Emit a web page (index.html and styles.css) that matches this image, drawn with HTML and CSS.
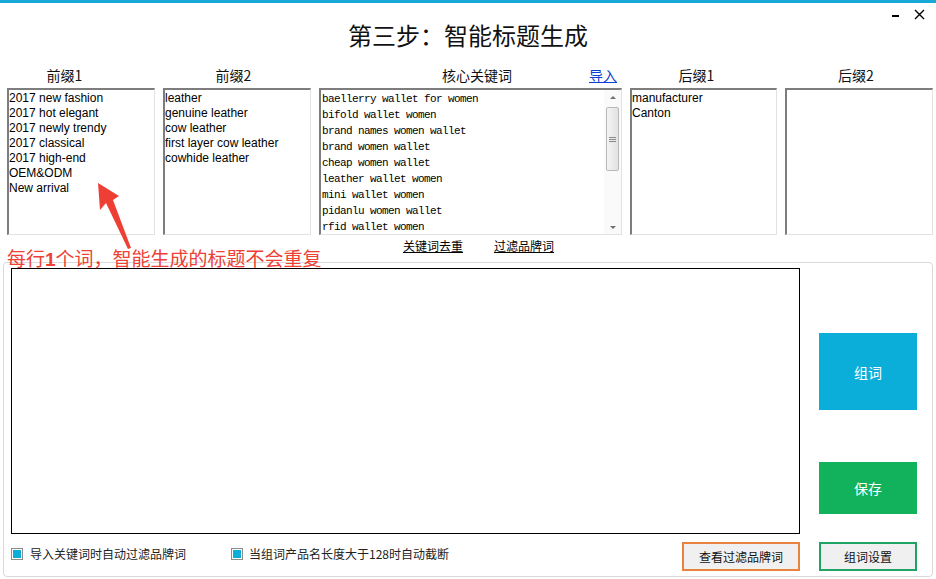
FILE: index.html
```html
<!DOCTYPE html>
<html lang="zh-CN">
<head>
<meta charset="utf-8">
<title>第三步：智能标题生成</title>
<link rel="stylesheet" href="styles.css">
</head>
<body>
<div class="app">
  <header class="header">
    <h1 class="title">第三步：智能标题生成</h1>
    <div class="controls">
      <svg class="ctl-min" width="8" height="10" viewBox="0 0 8 10"><rect x="0" y="6" width="7" height="2" fill="#000"/></svg>
      <svg class="ctl-close" width="11" height="11" viewBox="0 0 11 11"><path d="M1 1 L10 10 M10 1 L1 10" stroke="#000" stroke-width="1.4" fill="none"/></svg>
    </div>
  </header>

  <div class="labels">
    <div class="label label-p1">前缀1</div>
    <div class="label label-p2">前缀2</div>
    <div class="label label-core"><span class="core-name">核心关键词</span><a class="import" href="#">导入</a></div>
    <div class="label label-s1">后缀1</div>
    <div class="label label-s2">后缀2</div>
  </div>

  <div class="lists">
    <div class="list">
      <div>2017 new fashion</div>
      <div>2017 hot elegant</div>
      <div>2017 newly trendy</div>
      <div>2017 classical</div>
      <div>2017 high-end</div>
      <div>OEM&amp;ODM</div>
      <div>New arrival</div>
    </div>
    <div class="list">
      <div>leather</div>
      <div>genuine leather</div>
      <div>cow leather</div>
      <div>first layer cow leather</div>
      <div>cowhide leather</div>
    </div>
    <div class="list list-kw">
      <div class="kw-items">
        <div>baellerry wallet for women</div>
        <div>bifold wallet women</div>
        <div>brand names women wallet</div>
        <div>brand women wallet</div>
        <div>cheap women wallet</div>
        <div>leather wallet women</div>
        <div>mini wallet women</div>
        <div>pidanlu women wallet</div>
        <div>rfid wallet women</div>
      </div>
      <div class="sb">
        <div class="sb-btn"><span class="tri-up"></span></div>
        <div class="sb-track"><div class="sb-thumb"><span class="grip"></span></div></div>
        <div class="sb-btn sb-btn-down"><span class="tri-down"></span></div>
      </div>
    </div>
    <div class="list">
      <div>manufacturer</div>
      <div>Canton</div>
    </div>
    <div class="list"></div>
  </div>

  <div class="links">
    <a href="#">关键词去重</a>
    <a href="#">过滤品牌词</a>
  </div>

  <section class="panel">
    <div class="work">
      <div class="output"></div>
      <div class="side">
        <div class="btn-big btn-compose">组词</div>
        <div class="btn-big btn-save">保存</div>
      </div>
    </div>
    <div class="bottom">
      <label class="opt"><span class="box"></span>导入关键词时自动过滤品牌词</label>
      <label class="opt opt-2"><span class="box"></span>当组词产品名长度大于128时自动截断</label>
      <div class="btn-ghost btn-orange">查看过滤品牌词</div>
      <div class="btn-ghost btn-green">组词设置</div>
    </div>
  </section>

  <div class="note">每行<b>1</b>个词，智能生成的标题不会重复</div>
  <svg class="arrow" width="50" height="80" viewBox="0 0 50 80">
    <polygon points="8,5 29,18 23,22 41,70 38,71 16,25 10,32" fill="#ee3f35"/>
  </svg>
</div>
</body>
</html>
```

FILE: styles.css
```css
* {
  box-sizing: border-box;
  margin: 0;
  padding: 0;
}

body {
  margin: 0;
  background: #fff;
  font-family: "Liberation Sans", "Noto Sans CJK SC", sans-serif;
  color: #000;
}

.app {
  position: relative;
  width: 936px;
  height: 579px;
  overflow: hidden;
  border-top: 3px solid #17a8d8;
  background: #fff;
}

.header {
  display: grid;
  grid-template-columns: 1fr auto 1fr;
  height: 59px;
}

.title {
  grid-column: 2;
  align-self: center;
  padding-top: 5px;
  font-family: "Noto Sans CJK SC", sans-serif;
  font-weight: 400;
  font-size: 24px;
  line-height: 24px;
  color: #111;
}

.controls {
  grid-column: 3;
  justify-self: end;
  align-self: start;
  display: flex;
  align-items: flex-start;
  gap: 14px;
  padding: 6px 11px 0 0;
}

.labels,
.lists {
  display: grid;
  grid-template-columns: 148px 148px 303px 147px 148px;
  column-gap: 8px;
  padding-left: 7px;
}

.labels {
  height: 26px;
  align-items: center;
  font-family: "Noto Sans CJK SC", sans-serif;
  font-size: 14px;
  line-height: 18px;
  color: #111;
}

.label {
  text-align: center;
}

.label-p1 { padding-right: 33px; }
.label-p2 { padding-right: 7px; }
.label-s1 { padding-right: 14px; }
.label-s2 { padding-right: 6px; }

.label-core {
  display: flex;
  align-items: center;
  text-align: left;
}

.core-name {
  margin-left: 123px;
}

.import {
  margin-left: auto;
  margin-right: 5px;
  color: #0a3fd6;
  text-decoration: underline;
}

.lists {
  height: 147px;
}

.list {
  border-style: solid;
  border-width: 2px 1px 1px 2px;
  border-color: #7d7d7d #e2e2e2 #e2e2e2 #7d7d7d;
  padding-top: 1px;
  font-size: 12px;
  line-height: 15px;
  overflow: hidden;
  background: #fff;
  white-space: nowrap;
}

.list-kw {
  display: flex;
  padding-top: 0;
}

.kw-items {
  flex: 1;
  padding: 1px 0 0 1px;
  font-family: "Liberation Mono", monospace;
  font-size: 11px;
  letter-spacing: -0.6px;
  line-height: 16px;
  color: #000;
}

.sb {
  width: 17px;
  display: flex;
  flex-direction: column;
  background: #fafafa;
}

.sb-btn {
  height: 15px;
  display: flex;
  align-items: center;
  justify-content: center;
}

.sb-btn-down {
  height: 14px;
}

.tri-up,
.tri-down {
  width: 0;
  height: 0;
  border-left: 3px solid transparent;
  border-right: 3px solid transparent;
}

.tri-up { border-bottom: 3px solid #707070; }
.tri-down { border-top: 3px solid #707070; }

.sb-track {
  flex: 1;
  padding: 2px 2px 0 2px;
}

.sb-thumb {
  height: 64px;
  border: 1px solid #b8b8b8;
  border-radius: 2px;
  background: linear-gradient(to right, #f3f3f3, #e2e2e2);
  display: flex;
  align-items: center;
  justify-content: center;
}

.grip {
  width: 7px;
  height: 5px;
  background: repeating-linear-gradient(to bottom, #8a8a8a 0 1px, transparent 1px 2px);
}

.links {
  display: flex;
  gap: 31px;
  height: 27px;
  padding: 3px 0 0 403px;
  font-family: "Noto Sans CJK SC", sans-serif;
  font-size: 12px;
  line-height: 16px;
}

.links a {
  color: #000;
  text-decoration: underline;
}

.panel {
  margin-left: 3px;
  width: 930px;
  height: 315px;
  border: 1px solid #d9d9d9;
  border-radius: 4px;
  padding: 5px 15px 0 7px;
  display: flex;
  flex-direction: column;
}

.work {
  display: flex;
  height: 266px;
}

.output {
  width: 789px;
  border: 1px solid #000;
  background: #fff;
}

.side {
  margin-left: 19px;
  width: 98px;
  display: flex;
  flex-direction: column;
}

.btn-big {
  display: flex;
  align-items: center;
  justify-content: center;
  color: #fff;
  font-family: "Noto Sans CJK SC", sans-serif;
  font-size: 14px;
}

.btn-compose {
  margin-top: 65px;
  height: 77px;
  background: #0aaed9;
}

.btn-save {
  margin-top: 52px;
  height: 52px;
  background: #12b15b;
}

.bottom {
  display: flex;
  align-items: flex-start;
  height: 42px;
}

.opt {
  display: flex;
  align-items: center;
  gap: 7px;
  margin-top: 12px;
  font-family: "Noto Sans CJK SC", sans-serif;
  font-size: 12px;
  line-height: 16px;
  color: #222;
}

.opt-2 {
  margin-left: 45px;
  gap: 6px;
}

.box {
  width: 12px;
  height: 12px;
  border: 1px solid #8c8c8c;
  padding: 1px;
  background: #0aaed9;
  background-clip: content-box;
}

.btn-ghost {
  margin-top: 8px;
  height: 29px;
  display: flex;
  align-items: center;
  justify-content: center;
  background: #f0f0f0;
  font-family: "Noto Sans CJK SC", sans-serif;
  font-size: 12px;
  color: #111;
}

.btn-orange {
  margin-left: auto;
  width: 118px;
  border: 2px solid #e8823f;
}

.btn-green {
  margin-left: 19px;
  width: 98px;
  border: 2px solid #1fa463;
}

.note {
  position: absolute;
  left: 7px;
  top: 243px;
  font-family: "Noto Sans CJK SC", sans-serif;
  font-size: 19px;
  line-height: 24px;
  color: #ee4035;
  white-space: nowrap;
}

.note b {
  font-family: "Liberation Sans", sans-serif;
  font-weight: 700;
}

.arrow {
  position: absolute;
  left: 90px;
  top: 175px;
  pointer-events: none;
}
```
